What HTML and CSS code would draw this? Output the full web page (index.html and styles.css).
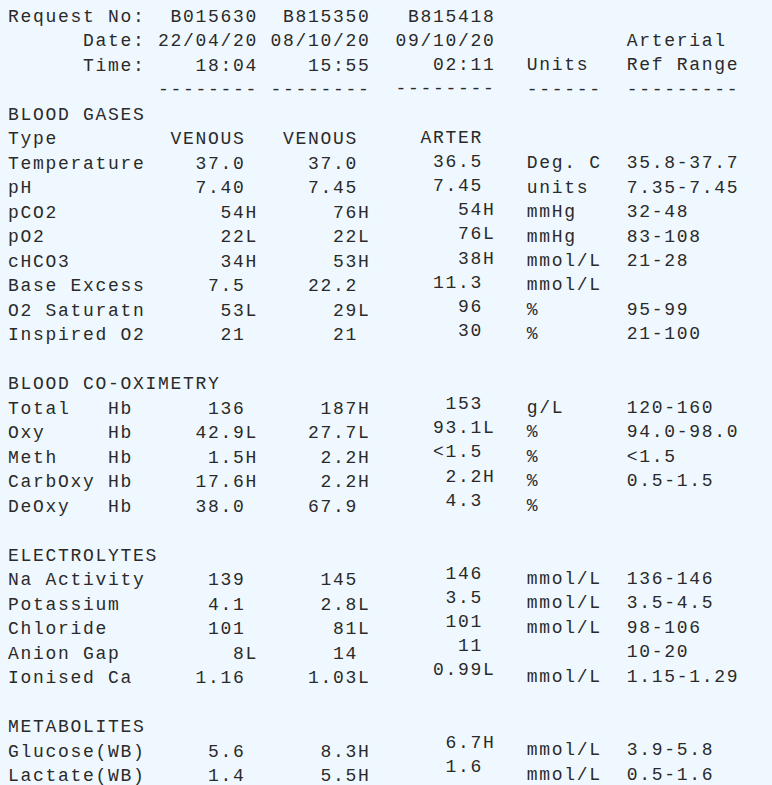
FILE: index.html
```html
<!DOCTYPE html>
<html lang="en">
<head>
<meta charset="utf-8">
<title>Blood gas report</title>
<link rel="stylesheet" href="styles.css">
</head>
<body>
<main class="report">
<pre class="pane pane-left">Request No:  B015630  B815350
      Date: 22/04/20 08/10/20
      Time:    18:04    15:55
            -------- --------
BLOOD GASES
Type         VENOUS   VENOUS
Temperature    37.0     37.0
pH             7.40     7.45
pCO2             54H      76H
pO2              22L      22L
cHCO3            34H      53H
Base Excess     7.5     22.2
O2 Saturatn      53L      29L
Inspired O2      21       21

BLOOD CO-OXIMETRY
Total   Hb      136      187H
Oxy     Hb     42.9L    27.7L
Meth    Hb      1.5H     2.2H
CarbOxy Hb     17.6H     2.2H
DeOxy   Hb     38.0     67.9

ELECTROLYTES
Na Activity     139      145
Potassium       4.1      2.8L
Chloride        101       81L
Anion Gap         8L      14
Ionised Ca     1.16     1.03L

METABOLITES
Glucose(WB)     5.6      8.3H
Lactate(WB)     1.4      5.5H</pre>
<pre class="pane pane-mid"> B815418
09/10/20
   02:11
--------

  ARTER
   36.5
   7.45
     54H
     76L
     38H
   11.3
     96
     30


    153
   93.1L
   &lt;1.5
    2.2H
    4.3


    146
    3.5
    101
     11
   0.99L


    6.7H
    1.6</pre>
<pre class="pane pane-right">

        Arterial
Units   Ref Range
------  ---------


Deg. C  35.8-37.7
units   7.35-7.45
mmHg    32-48
mmHg    83-108
mmol/L  21-28
mmol/L
%       95-99
%       21-100


g/L     120-160
%       94.0-98.0
%       &lt;1.5
%       0.5-1.5
%


mmol/L  136-146
mmol/L  3.5-4.5
mmol/L  98-106
        10-20
mmol/L  1.15-1.29


mmol/L  3.9-5.8
mmol/L  0.5-1.6</pre>
</main>
</body>
</html>
```
FILE: styles.css
```css
html, body {
  margin: 0;
  padding: 0;
  height: 100%;
  overflow: hidden;
  background: #f0f8ff;
}

.report {
  --cell: 12.5px;
  display: flex;
  align-items: flex-start;
  padding: 4.5px 0 0 8px;
  color: #2a2a2a;
}

.pane {
  margin: 0;
  font-family: "Liberation Mono", "Courier New", monospace;
  font-size: 18px;
  letter-spacing: 1.7px;
  line-height: 24.5px;
  white-space: pre;
}

.pane-left {
  width: calc(31 * var(--cell));
  flex: none;
}

.pane-mid {
  width: calc(10.5 * var(--cell));
  flex: none;
  line-height: 24.22px;
}

.pane-right {
  flex: 1;
  line-height: 24.45px;
}
```
